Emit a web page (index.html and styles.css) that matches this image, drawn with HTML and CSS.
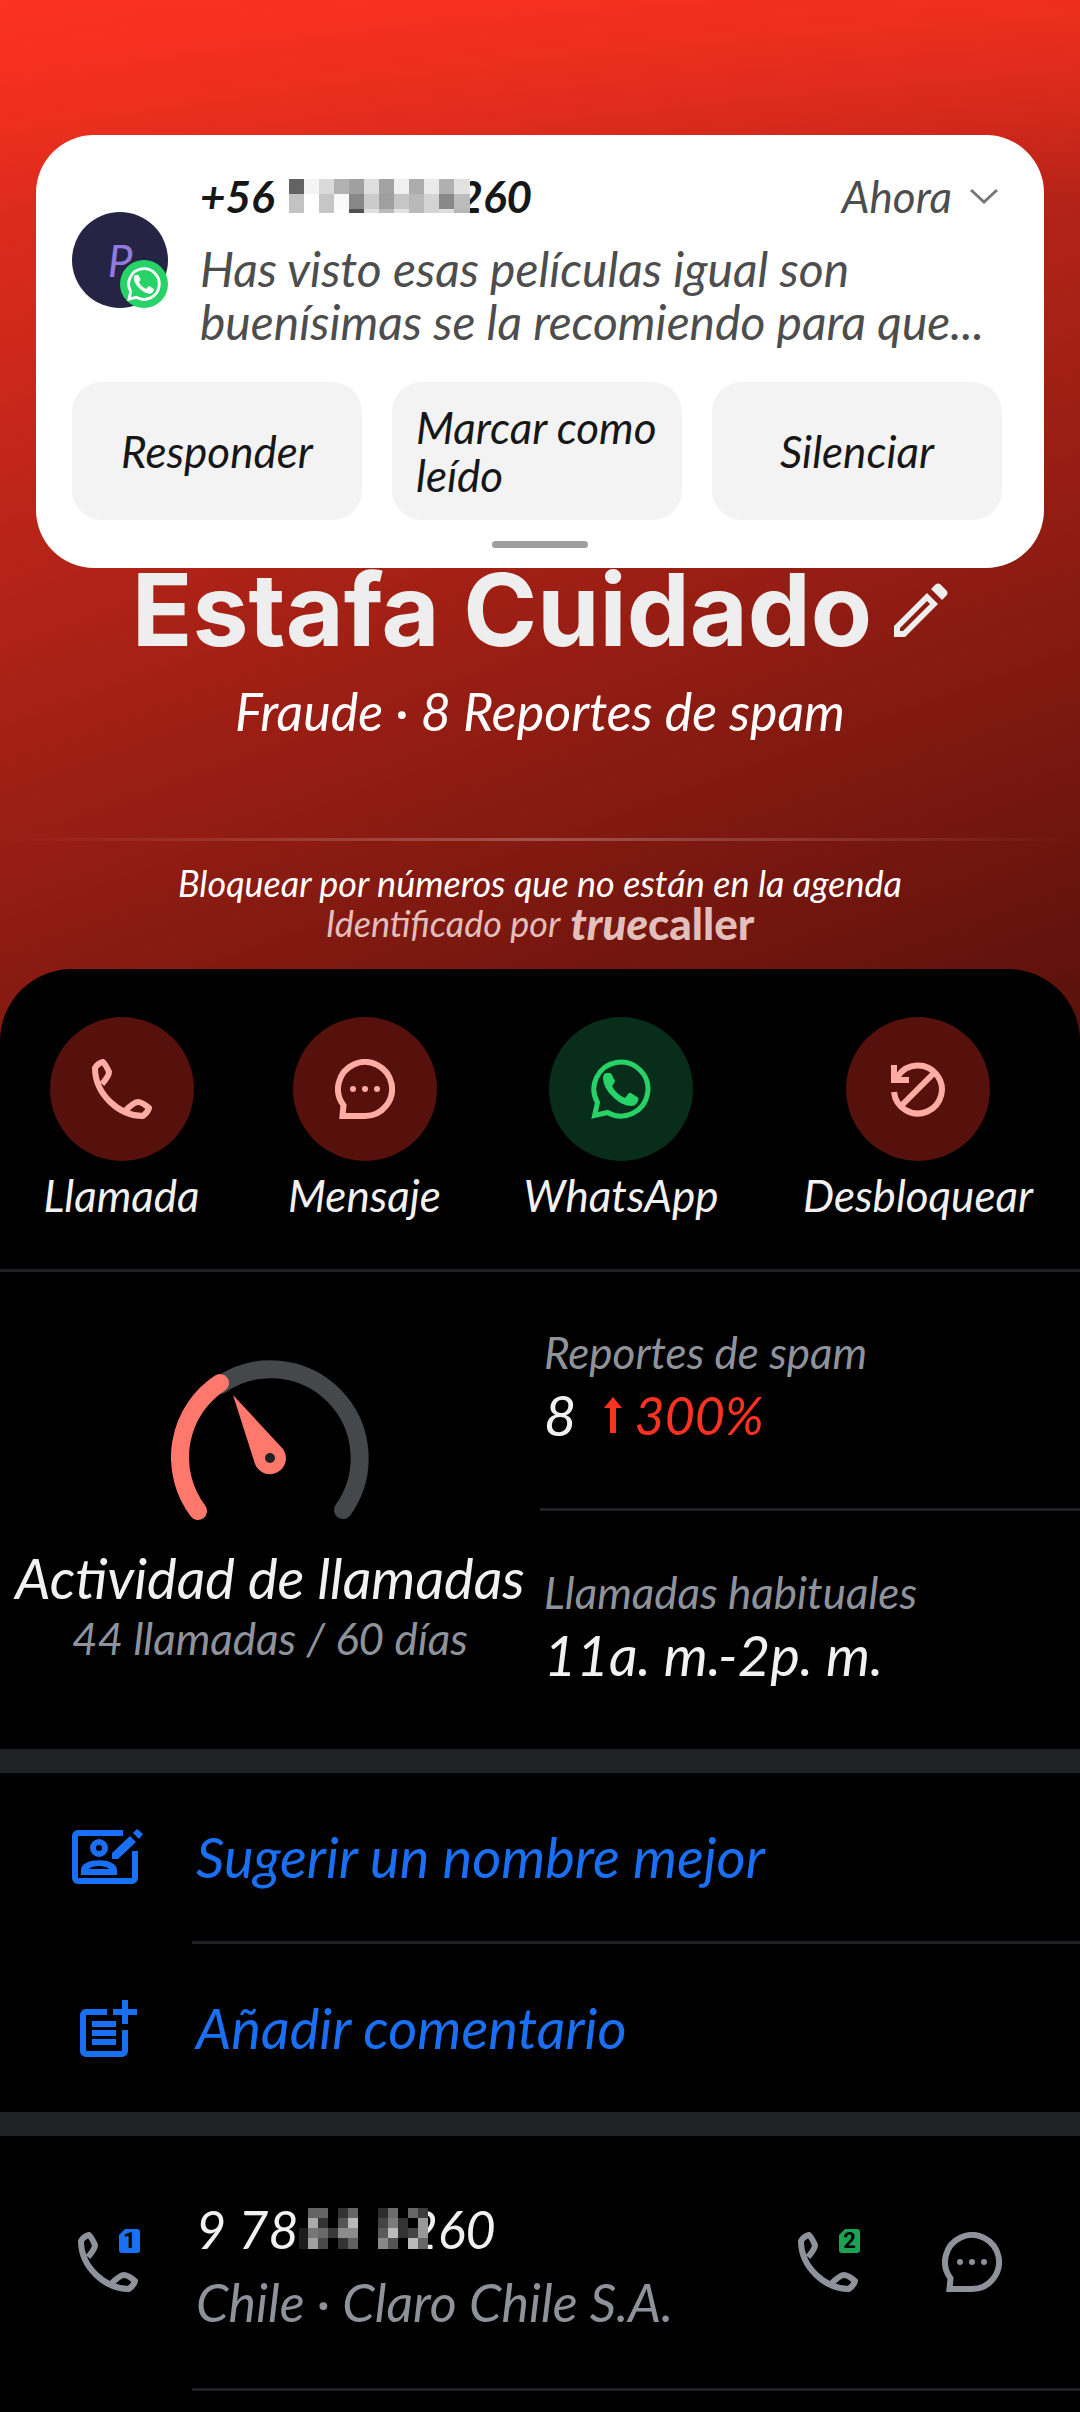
FILE: index.html
```html
<!DOCTYPE html>
<html lang="es">
    <head>
        <meta charset="utf-8">
        <meta name="viewport" content="width=device-width, initial-scale=1">
        <title>Estafa Cuidado</title>
        <link rel="stylesheet" href="styles.css">
    </head>
    <body>
        <!-- shared icons -->
        <svg class="sprite">
            <symbol id="i-phone" viewBox="0 0 60 60">
                <path fill="none" stroke="currentColor" stroke-width="6" stroke-linejoin="round" d="M10 25Q17 17 17 13Q14 6 11 3Q6 4 3 9C3 35 27 57 51 57Q56 53 57 49Q50 43 46 43Q42 43 33 52"/>
            </symbol>
            <symbol id="i-message" viewBox="0 0 60 60">
                <path fill="none" stroke="currentColor" stroke-width="6" d="M30 57A27 27 0 1 0 8.500 46.300L7.500 57Z"/>
                <g fill="currentColor"><circle cx="18" cy="30" r="3"/><circle cx="30" cy="30" r="3"/><circle cx="42" cy="30" r="3"/></g>
            </symbol>
            <symbol id="i-whatsapp" viewBox="0 0 60 60">
                <path fill="none" stroke="currentColor" stroke-width="5" d="M3.600 56.500L6.500 43.500A27 27 0 1 1 16.500 53.500Z"/>
                <path fill="currentColor" d="M12 19Q12 15 15 14H19Q20 14 21 16L24 22Q24 23 21 27Q25 35 34 39L38 34Q39 34 40 34L46 38Q48 38 47 42Q45 47 40 47Q32 47 23 39Q12 29 12 19Z"/>
            </symbol>
        </svg>

        <div class="notification">
            <div class="notification-body">
                <div class="avatar">
                    <span>P</span>
                    <div class="avatar-badge"><svg><use href="#i-whatsapp"/></svg></div>
                </div>
                <div class="notification-text">
                    <div class="notification-head">
                        <div class="sender">+56
                            <svg class="mask" width="181" height="34" viewBox="0 0 181 34" shape-rendering="crispEdges">
                                <rect width="181" height="34" fill="#fff"/>
                                <rect x="0" width="15" height="15" fill="#636363"/><rect x="15" width="15" height="15" fill="#f4f4f4"/><rect x="30" width="15" height="15" fill="#dadada"/><rect x="45" width="15" height="15" fill="#b2b2b2"/><rect x="60" width="15" height="15" fill="#a0a0a0"/><rect x="75" width="15" height="15" fill="#dedede"/><rect x="90" width="15" height="15" fill="#a3a3a3"/><rect x="105" width="15" height="15" fill="#f0f0f0"/><rect x="120" width="15" height="15" fill="#adadad"/><rect x="135" width="15" height="15" fill="#eaeaea"/><rect x="150" width="15" height="15" fill="#b0b0b0"/><rect x="165" width="16" height="15" fill="#e2e2e2"/>
                                <rect x="0" y="15" width="15" height="19" fill="#c3c3c3"/><rect x="30" y="15" width="15" height="19" fill="#c6c6c6"/><rect x="45" y="15" width="15" height="15" fill="#f9f9f9"/><rect x="60" y="15" width="15" height="15" fill="#888"/><rect x="75" y="15" width="15" height="15" fill="#cbcbcb"/><rect x="90" y="15" width="15" height="15" fill="#9f9f9f"/><rect x="105" y="15" width="15" height="15" fill="#c6c6c6"/><rect x="120" y="15" width="15" height="19" fill="#b9b9b9"/><rect x="135" y="15" width="15" height="19" fill="#d4d4d4"/><rect x="150" y="15" width="15" height="15" fill="#888"/><rect x="165" y="15" width="16" height="15" fill="#bcbcbc"/>
                                <rect x="60" y="30" width="15" height="4" fill="#505050"/><rect x="75" y="30" width="15" height="4" fill="#dfdfdf"/><rect x="90" y="30" width="15" height="4" fill="#bbb"/><rect x="105" y="30" width="15" height="4" fill="#e2e2e2"/><rect x="150" y="30" width="15" height="4" fill="#dedede"/><rect x="165" y="30" width="16" height="4" fill="#b6b6b6"/>
                            </svg>260
                        </div>
                        <div class="time">Ahora
                            <svg width="28" height="16" viewBox="0 0 28 16"><path d="M1 2l13 12L27 2" fill="none" stroke="#777" stroke-width="3"/></svg>
                        </div>
                    </div>
                    <div class="message">Has visto esas películas igual son<br>buenísimas se la recomiendo para que...</div>
                </div>
            </div>
            <div class="notification-actions">
                <button>Responder</button>
                <button>Marcar como leído</button>
                <button>Silenciar</button>
            </div>
            <div class="handle"></div>
        </div>

        <div class="hero">
            <div class="name">
                <h1>Estafa Cuidado</h1>
                <svg width="54" height="54" viewBox="0 0 54 54" fill="#eee"><path fill-rule="evenodd" d="M0 54V43L33 10L44 21L11 54ZM6 48H9L36 21L33 18L6 45Z"/><path d="M37 6L42 1Q44 0 46 1L53 8Q54 10 53 12L48 17Z"/></svg>
            </div>
            <div class="kind">Fraude · 8 Reportes de spam</div>
            <div class="hero-line"></div>
            <div class="block-reason">Bloquear por números que no están en la agenda</div>
            <div class="identified">Identificado por <b><i>true</i>caller</b></div>
        </div>

        <div class="sheet">
            <div class="actions">
                <button class="action"><span class="circle"><svg><use href="#i-phone"/></svg></span>Llamada</button>
                <button class="action"><span class="circle"><svg><use href="#i-message"/></svg></span>Mensaje</button>
                <button class="action"><span class="circle green"><svg><use href="#i-whatsapp"/></svg></span>WhatsApp</button>
                <button class="action"><span class="circle">
                    <svg viewBox="0 0 60 60"><path fill="none" stroke="currentColor" stroke-width="6" d="M6 33A24 24 0 1 0 10 17M14 46L47 13"/><path fill="currentColor" d="M3 6H9V14L13 18H21V24H3Z"/></svg>
                </span>Desbloquear</button>
            </div>

            <div class="stats">
                <div class="activity">
                    <svg width="198" height="162" viewBox="0 0 198 162">
                        <g fill="none" stroke-width="18" stroke-linecap="round">
                            <path stroke="#44484b" d="M49 26A89 89 0 0 1 172 151"/>
                            <path stroke="#ff786b" d="M27 152A89 89 0 0 1 49 24"/>
                        </g>
                        <path fill="#ff786b" d="M62 36L112 90A16 16 0 1 1 84 105Z"/>
                        <circle cx="99" cy="99" r="5" fill="#202124"/>
                    </svg>
                    <div class="value">Actividad de llamadas</div>
                    <div class="label">44 llamadas / 60 días</div>
                </div>
                <div class="details">
                    <div class="detail">
                        <div class="label">Reportes de spam</div>
                        <div class="value">8
                            <span class="up"><svg width="18" height="36" viewBox="0 0 18 36"><path fill="currentColor" d="M9 0L18 11H12V36H6V11H0Z"/></svg>300%</span>
                        </div>
                    </div>
                    <div class="detail">
                        <div class="label">Llamadas habituales</div>
                        <div class="value">11a. m.-2p. m.</div>
                    </div>
                </div>
            </div>

            <div class="group">
                <button class="row">
                    <span class="row-icon"><svg width="72" height="56" viewBox="0 0 72 56">
                        <path fill="none" stroke="currentColor" stroke-width="6" d="M51 4H6a3 3 0 0 0-3 3V49a3 3 0 0 0 3 3H60a3 3 0 0 0 3-3V22"/>
                        <circle cx="27" cy="19" r="6" fill="none" stroke="currentColor" stroke-width="6"/>
                        <path fill="currentColor" fill-rule="evenodd" d="M9 46V41C9 28 45 28 45 41V46ZM17 40H37C34 36 20 36 17 40Z"/>
                        <path stroke="#000" stroke-width="10" d="M54 18L68 4"/>
                        <path fill="currentColor" d="M40 30V24L58 7L64 13L46 30ZM61 4L65 0L71 5L67 10Z"/>
                    </svg></span>
                    <span class="row-text">Sugerir un nombre mejor</span>
                </button>
                <button class="row">
                    <span class="row-icon"><svg width="57" height="57" viewBox="0 0 57 57">
                        <path fill="none" stroke="currentColor" stroke-width="6" d="M27 12H6a3 3 0 0 0-3 3V51a3 3 0 0 0 3 3H42a3 3 0 0 0 3-3V30M12 24H36M12 33H36M12 42H36M45 0V24M33 12H57"/>
                    </svg></span>
                    <span class="row-text">Añadir comentario</span>
                </button>
            </div>

            <div class="group">
                <div class="row number-row">
                    <span class="row-icon"><button class="call" aria-label="SIM 1">
                        <svg><use href="#i-phone"/></svg><span class="sim">1</span>
                    </button></span>
                    <div class="row-text">
                        <div class="number">9 78<svg class="mask dark" width="129" height="42" viewBox="0 0 129 42" shape-rendering="crispEdges">
                                <rect width="129" height="42" fill="#000"/>
                                <rect x="9" width="20" height="10" fill="#636363"/><rect x="9" y="10" width="10" height="10" fill="#aaa"/><rect x="19" y="10" width="10" height="10" fill="#333"/><rect x="0" y="20" width="9" height="21" fill="#1d1d1d"/><rect x="9" y="20" width="10" height="10" fill="#777"/><rect x="19" y="20" width="10" height="10" fill="#6a6a6a"/><rect x="9" y="30" width="10" height="11" fill="#a0a0a0"/><rect x="19" y="30" width="10" height="11" fill="#4a4a4a"/><rect x="29" y="20" width="10" height="10" fill="#3a3a3a"/>
                                <rect x="39" width="10" height="10" fill="#333"/><rect x="49" width="10" height="10" fill="#666"/><rect x="39" y="10" width="10" height="10" fill="#555"/><rect x="49" y="10" width="10" height="10" fill="#b8b8b8"/><rect x="39" y="20" width="20" height="10" fill="#8c8c8c"/><rect x="39" y="30" width="10" height="11" fill="#333"/><rect x="49" y="30" width="10" height="11" fill="#606060"/>
                                <rect x="79" width="10" height="10" fill="#2d2d2d"/><rect x="89" width="10" height="10" fill="#6c6c6c"/><rect x="79" y="10" width="10" height="10" fill="#444"/><rect x="89" y="10" width="10" height="10" fill="#7c7c7c"/><rect x="79" y="20" width="10" height="10" fill="#5a5a5a"/><rect x="89" y="20" width="10" height="10" fill="#bbb"/><rect x="79" y="30" width="10" height="11" fill="#888"/><rect x="89" y="30" width="10" height="11" fill="#555"/>
                                <rect x="99" y="10" width="10" height="20" fill="#333"/><rect x="109" width="10" height="10" fill="#666"/><rect x="119" width="10" height="10" fill="#3c3c3c"/><rect x="119" y="10" width="10" height="20" fill="#999"/><rect x="109" y="20" width="10" height="10" fill="#444"/><rect x="109" y="30" width="10" height="11" fill="#bbb"/><rect x="119" y="30" width="10" height="11" fill="#666"/>
                            </svg>260</div>
                        <div class="label">Chile · Claro Chile S.A.</div>
                    </div>
                    <div class="row-buttons">
                        <button class="call" aria-label="SIM 2">
                            <svg><use href="#i-phone"/></svg><span class="sim sim-2">2</span>
                        </button>
                        <button class="call" aria-label="Mensaje"><svg><use href="#i-message"/></svg></button>
                    </div>
                </div>
            </div>
        </div>
    </body>
</html>
```
FILE: styles.css
```css
* {
    box-sizing: border-box;
}
body {
    margin: 0;
    min-height: 100vh;
    position: relative;
    background: #000;
    color: #f1f1f1;
    font-family: Lato, "Open Sans", sans-serif;
    font-style: italic;
    font-size: 44px;
    line-height: 48px;
}
button {
    border: 0;
    padding: 0;
    background: none;
    color: inherit;
    font: inherit;
    cursor: pointer;
}
svg {
    display: block;
    flex: none;
}
.sprite {
    display: none;
}

/* incoming message over the caller page */
.notification {
    position: absolute;
    top: 135px;
    left: 36px;
    right: 36px;
    padding: 37px 36px 20px;
    border-radius: 58px;
    background: #fff;
    color: #171717;
}
.notification-body {
    display: flex;
    align-items: center;
    gap: 32px;
    padding-right: 6px;
}
.avatar {
    position: relative;
    flex: none;
    width: 96px;
    height: 96px;
    border-radius: 50%;
    background: #252445;
    color: #927ae0;
    text-align: center;
    line-height: 96px;
}
.avatar-badge {
    position: absolute;
    right: 0;
    bottom: 0;
    width: 48px;
    height: 48px;
    padding: 7px;
    border-radius: 50%;
    background: #27d366;
    color: #fff;
}
.avatar-badge svg {
    width: 34px;
    height: 34px;
}
.notification-text {
    flex: 1;
    min-width: 0;
}
.notification-head {
    display: flex;
    justify-content: space-between;
    margin-bottom: 22px;
}
.sender, .time {
    display: flex;
    align-items: center;
    gap: 18px;
}
.sender {
    font-weight: bold;
    gap: 0;
}
.time {
    color: #4d4d4d;
    padding-right: 4px;
}
.mask {
    position: relative;
    margin-left: 14px;
    margin-right: -12px;
}
.mask.dark {
    margin-left: 0;
    margin-right: -20px;
}
.message {
    color: #4d4d4d;
    font-size: 48px;
    line-height: 53px;
    white-space: nowrap;
}
.notification-actions {
    display: grid;
    grid-template-columns: repeat(3, 1fr);
    gap: 30px;
    margin-top: 34px;
    padding-right: 6px;
}
.notification-actions button {
    height: 138px;
    padding: 0 24px;
    border-radius: 30px;
    background: #f3f3f3;
}
.notification-actions button:nth-child(2) {
    text-align: left;
}
.handle {
    width: 96px;
    height: 7px;
    margin: 21px auto 0;
    border-radius: 4px;
    background: #9e9e9e;
}

.hero {
    padding: 554px 0 98px;
    background:
        linear-gradient(rgba(255,50,32,0.7), rgba(255,50,32,0) 200px),
        linear-gradient(160deg, #f43020, #58110b);
    text-align: center;
}
.name {
    display: flex;
    justify-content: center;
    align-items: center;
    gap: 22px;
}
h1 {
    margin: 0;
    color: #eee;
    font: 700 100px/112px Inter, sans-serif;
}
.kind {
    margin-top: 15px;
    color: #fff;
    font-size: 52px;
    line-height: 60px;
}
.hero-line {
    height: 3px;
    margin: 97px 0 22px;
    background: linear-gradient(90deg, transparent, rgba(255,255,255,0.25), transparent);
}
.block-reason, .identified {
    color: #fff;
    font-size: 36px;
    line-height: 40px;
}
.identified {
    display: flex;
    justify-content: center;
    align-items: center;
    gap: 10px;
    color: #e3bfbc;
}
.identified b {
    font-size: 44px;
    font-style: normal;
    font-weight: 900;
}

.sheet {
    margin-top: -72px;
    border-radius: 72px 72px 0 0;
    background: #000;
}
.actions {
    display: grid;
    grid-template-columns: 9fr 9fr 10fr 12fr;
    padding: 48px 0 50px;
    border-bottom: 3px solid #202124;
}
.action {
    display: flex;
    flex-direction: column;
    align-items: center;
    gap: 10px;
}
.circle {
    display: flex;
    align-items: center;
    justify-content: center;
    width: 144px;
    height: 144px;
    border-radius: 50%;
    background: #56110c;
    color: #ffaca5;
}
.circle.green {
    background: #082e1b;
    color: #27d366;
}
.circle svg, .call svg {
    width: 60px;
    height: 60px;
}

.stats {
    display: grid;
    grid-template-columns: 1fr 1fr;
}
.activity {
    display: flex;
    flex-direction: column;
    align-items: center;
    padding: 87px 0;
}
.activity .value {
    margin: 27px 0 6px;
    white-space: nowrap;
}
.label {
    color: #8e939b;
}
.value {
    font-size: 56px;
    line-height: 60px;
}
.details {
    display: grid;
    grid-template-rows: 1fr 1fr;
}
.detail {
    display: flex;
    flex-direction: column;
    justify-content: center;
    gap: 9px;
    padding: 0 0 6px 4px;
    border-bottom: 3px solid #202124;
}
.detail:last-child {
    border-bottom: 0;
}
.detail .value, .up {
    display: flex;
    align-items: center;
    gap: 12px;
}
.up {
    margin-left: 16px;
    color: #ff3221;
    font-size: 52px;
}

.group {
    border-top: 24px solid #202124;
}
.row {
    display: flex;
    align-items: center;
    width: 100%;
    height: 168px;
    padding-left: 72px;
    color: #1a70f5;
    font-size: 56px;
    line-height: 60px;
    text-align: left;
}
.row-icon {
    display: flex;
    justify-content: center;
    flex: none;
    width: 72px;
    margin-right: 48px;
}
.row-text {
    display: flex;
    flex: 1;
    flex-direction: column;
    justify-content: center;
    align-self: stretch;
    padding-left: 4px;
}
.row:first-child {
    height: 171px;
}
.row:first-child .row-icon {
    padding-bottom: 3px;
}
.row:first-child .row-text {
    border-bottom: 3px solid #202124;
}
.row.number-row {
    height: 255px;
    color: #f1f1f1;
}
.number {
    display: flex;
    align-items: center;
    margin-bottom: 19px;
    font-size: 52px;
}
.row .label {
    font-size: 52px;
    line-height: 48px;
}
.row-buttons {
    display: flex;
    align-items: center;
    align-self: stretch;
    gap: 84px;
    padding-right: 78px;
    border-bottom: 3px solid #202124;
}
.call {
    position: relative;
    color: #8e939b;
}
.sim {
    position: absolute;
    top: -3px;
    right: -2px;
    width: 21px;
    height: 24px;
    border-radius: 3px;
    background: #1a70f5;
    clip-path: polygon(6px 0, 100% 0, 100% 100%, 0 100%, 0 6px);
    color: #000;
    font: bold 22px/24px Roboto, sans-serif;
    text-align: center;
}
.sim-2 {
    background: #1ba255;
}
```
